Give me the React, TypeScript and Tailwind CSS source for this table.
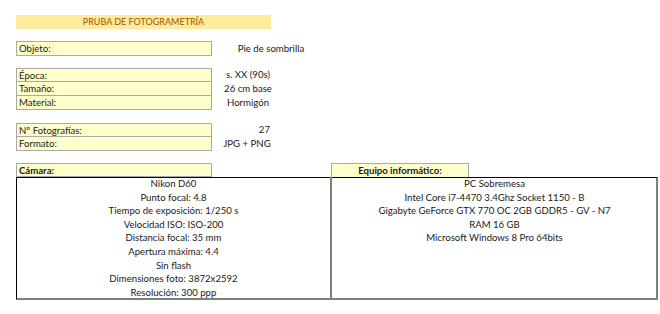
import { memo } from "react";

const camara = [
  "Nikon D60",
  "Punto focal: 4.8",
  "Tiempo de exposición: 1/250 s",
  "Velocidad ISO: ISO-200",
  "Distancia focal: 35 mm",
  "Apertura máxima: 4.4",
  "Sin flash",
  "Dimensiones foto: 3872x2592",
  "Resolución: 300 ppp",
];

const equipo = [
  "PC Sobremesa",
  "Intel Core i7-4470 3.4Ghz Socket 1150 - B",
  "Gigabyte GeForce GTX 770 OC 2GB GDDR5 - GV - N7",
  "RAM 16 GB",
  "Microsoft Windows 8 Pro 64bits",
];

const Label = ({ text, first = true }: { text: string; first?: boolean }) => (
  <div
    className={`w-[196px] bg-[#ffffcc] border-x border-b border-[#a9a9a9] px-[2px] leading-[13px] ${
      first ? "border-t h-[14px]" : "h-[14px]"
    }`}
  >
    {text}
  </div>
);

const App = memo(() => {
  return (
    <div className="w-[660px] h-[314px] bg-white pl-[16px] pt-[15px] text-[9.6px] text-[#1a1a1a] font-['Lato','Liberation_Sans',sans-serif]">
      <div className="w-[255px] h-[14px] bg-[#ffeb9c] text-[#9c5700] text-[9px] text-center leading-[14px]">
        PRUBA DE FOTOGRAMETRÍA
      </div>

      <div className="mt-[12px] flex">
        <div className="w-[196px] h-[15px] bg-[#ffffcc] border border-[#a9a9a9] px-[2px] leading-[13px]">
          Objeto:
        </div>
        <div className="w-[118px] text-center leading-[15px]">Pie de sombrilla</div>
      </div>

      <div className="mt-[12px] flex flex-col">
        {[
          ["Época:", "s. XX (90s)"],
          ["Tamaño:", "26 cm base"],
          ["Material:", "Hormigón"],
        ].map(([l, v], i) => (
          <div key={l} className="flex">
            <Label text={l} first={i == 0} />
            <div className="w-[72px] text-center leading-[14px]">{v}</div>
          </div>
        ))}
      </div>

      <div className="mt-[13px] flex flex-col">
        <div className="flex">
          <Label text="Nº Fotografías:" />
          <div className="w-[58px] text-right leading-[14px]">27</div>
        </div>
        <div className="flex">
          <Label text="Formato:" first={false} />
          <div className="w-[70px] text-center leading-[14px]">JPG + PNG</div>
        </div>
      </div>

      <div className="mt-[12px] flex font-bold">
        <Label text="Cámara:" />
        <div className="w-[119px]" />
        <div className="w-[138px] h-[14px] bg-[#ffffcc] border border-b-0 border-[#a9a9a9] text-center leading-[13px]">
          Equipo informático:
        </div>
      </div>

      <div className="w-[642px] grid grid-cols-[315px_325px] border-l border-t border-t-black border-l-black border-r-2 border-b-2 border-[#7f7f7f]">
        <div className="h-[121px] border-r-2 border-[#7f7f7f] flex flex-col items-center leading-[13.6px] -mt-px">
          {camara.map((t) => (
            <div key={t}>{t}</div>
          ))}
        </div>
        <div className="flex flex-col items-center leading-[13.6px] -mt-px">
          {equipo.map((t) => (
            <div key={t}>{t}</div>
          ))}
        </div>
      </div>
    </div>
  );
});

export default App;
